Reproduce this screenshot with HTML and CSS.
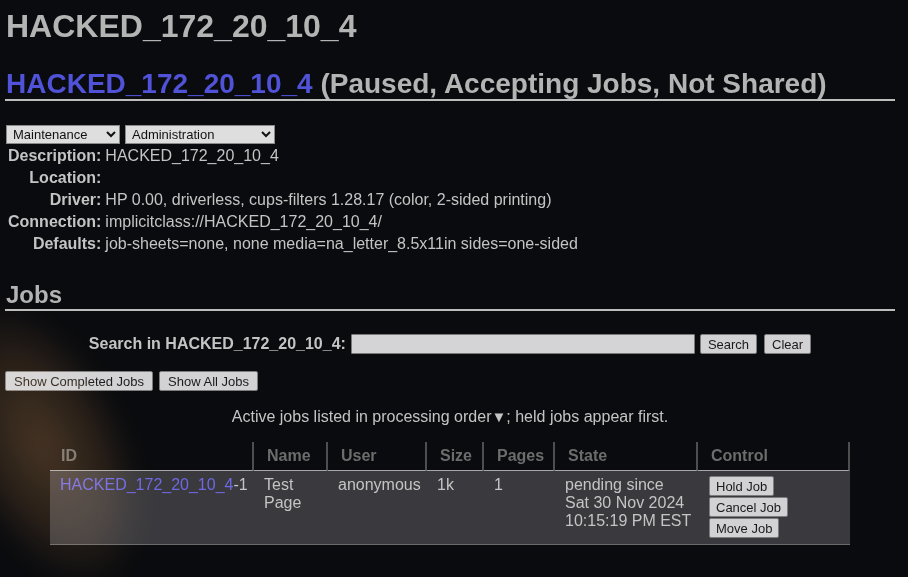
FILE: index.html
```html
<!DOCTYPE html>
<html lang="en">
<head>
<meta charset="utf-8">
<title>HACKED_172_20_10_4 - CUPS</title>
<link rel="stylesheet" href="styles.css">
</head>
<body>
<div class="frame">
<div class="glow"></div>
<main class="page">
  <h1 class="title">HACKED_172_20_10_4</h1>
  <h2 class="printer"><a href="#">HACKED_172_20_10_4</a> (Paused, Accepting Jobs, Not Shared)</h2>

  <form class="actions">
    <select class="sel sel-maint"><option>Maintenance</option></select>
    <select class="sel sel-admin"><option>Administration</option></select>
  </form>

  <table class="info">
    <tr><th>Description:</th><td>HACKED_172_20_10_4</td></tr>
    <tr><th>Location:</th><td></td></tr>
    <tr><th>Driver:</th><td>HP 0.00, driverless, cups-filters 1.28.17 (color, 2-sided printing)</td></tr>
    <tr><th>Connection:</th><td>implicitclass://HACKED_172_20_10_4/</td></tr>
    <tr><th>Defaults:</th><td>job-sheets=none, none media=na_letter_8.5x11in sides=one-sided</td></tr>
  </table>

  <h2 class="section">Jobs</h2>

  <form class="search">
    <label class="search-label">Search in HACKED_172_20_10_4:</label>
    <input class="search-input" type="text">
    <button type="button" class="btn btn-search">Search</button>
    <button type="button" class="btn btn-clear">Clear</button>
  </form>

  <div class="show">
    <button type="button" class="btn btn-show">Show Completed Jobs</button>
    <button type="button" class="btn btn-show">Show All Jobs</button>
  </div>

  <p class="note">Active jobs listed in processing order<span class="arrow">▼</span>; held jobs appear first.</p>

  <table class="jobs">
    <colgroup>
      <col class="c-id"><col class="c-name"><col class="c-user"><col class="c-size"><col class="c-pages"><col class="c-state"><col class="c-control">
    </colgroup>
    <thead>
      <tr><th class="first">ID</th><th>Name</th><th>User</th><th>Size</th><th>Pages</th><th>State</th><th>Control</th></tr>
    </thead>
    <tbody>
      <tr>
        <td class="nowrap"><a href="#">HACKED_172_20_10_4</a>-1</td>
        <td>Test<br>Page</td>
        <td>anonymous</td>
        <td>1k</td>
        <td>1</td>
        <td class="nowrap">pending since<br>Sat 30 Nov 2024<br>10:15:19 PM EST</td>
        <td class="control">
          <button type="button" class="btn btn-job">Hold Job</button>
          <button type="button" class="btn btn-job">Cancel Job</button>
          <button type="button" class="btn btn-job">Move Job</button>
        </td>
      </tr>
    </tbody>
  </table>
</main>
</div>
</body>
</html>
```

FILE: styles.css
```css
html, body {
  margin: 0;
  padding: 0;
  background: #0a0b0e;
}
body {
  font-family: "Liberation Sans", Arial, sans-serif;
  font-size: 16px;
  color: #c4c4c4;
}
.frame {
  position: relative;
  height: 577px;
  overflow: hidden;
}
.page {
  width: 890px;
  margin-left: 5px;
  padding-top: 8px;
}
a { color: #5657dc; text-decoration: none; }

.title {
  margin: 0;
  padding-left: 1px;
  font-size: 32px;
  line-height: 37px;
  font-weight: bold;
  color: #b4b4b4;
}
.printer {
  margin: 24px 0 0;
  padding-left: 1px;
  font-size: 28px;
  line-height: 30px;
  font-weight: bold;
  color: #b4b4b4;
  border-bottom: 2px solid #bdbdbd;
}
.printer a { color: #5052d8; }

.actions {
  display: flex;
  gap: 5px;
  margin: 24px 0 0 1px;
}
.sel {
  font-family: "Liberation Sans", Arial, sans-serif;
  font-size: 13px;
  height: 19px;
  padding: 0 0 0 2px;
  background-color: #dedede;
  color: #111;
  border: 1px solid #8a8a8a;
  border-radius: 0;
}
.sel-maint { width: 114px; }
.sel-admin { width: 150px; }

.info {
  border-collapse: collapse;
  margin: 1px 0 0 1px;
}
.info th, .info td {
  padding: 2px 2px;
  line-height: 18px;
  vertical-align: top;
}
.info th {
  text-align: right;
  font-weight: bold;
  color: #c4c4c4;
  white-space: nowrap;
}
.info td { color: #c4c4c4; }

.section {
  margin: 26px 0 0;
  padding-left: 1px;
  font-size: 24px;
  line-height: 28px;
  font-weight: bold;
  color: #b4b4b4;
  border-bottom: 2px solid #bdbdbd;
}

.search {
  display: flex;
  justify-content: center;
  align-items: center;
  margin: 23px 0 0;
}
.search-label {
  font-weight: bold;
  color: #c4c4c4;
  margin-right: 5px;
}
.search-input {
  width: 344px;
  height: 20px;
  box-sizing: border-box;
  background: #d4d4d6;
  border: 1px solid #7a7a7a;
  border-radius: 1px;
  margin: 0 5px 0 0;
}
.btn {
  font-family: "Liberation Sans", Arial, sans-serif;
  font-size: 13px;
  height: 20px;
  box-sizing: border-box;
  padding: 0 6px;
  background: #d2d2d4;
  color: #1a1a1a;
  border: 1px solid #7c7c7c;
  border-radius: 2px;
  line-height: 17px;
}
.btn-search { margin-right: 7px; padding: 0 7px; }
.btn-clear { padding: 0 7px; }

.show {
  display: flex;
  gap: 6px;
  margin-top: 17px;
}
.btn-show { padding: 0 8px; }

.note {
  margin: 17px 0 0;
  text-align: center;
  line-height: 18px;
  color: #c4c4c4;
}
.arrow { font-size: 15px; }

.jobs {
  margin: 16px auto 0;
  width: 800px;
  table-layout: fixed;
  border-collapse: separate;
  border-spacing: 0;
}
.c-id { width: 204px; }
.c-name { width: 74px; }
.c-user { width: 99px; }
.c-size { width: 57px; }
.c-pages { width: 71px; }
.c-state { width: 143px; }
.c-control { width: 152px; }

.jobs th {
  text-align: left;
  font-weight: bold;
  color: #6c6c6c;
  padding: 5px 2px 5px 13px;
  line-height: 18px;
  border-right: 2px solid #4e4e4e;
  border-bottom: 1px solid #a8a8a8;
}
.jobs th.first { padding-left: 11px; }
.jobs td {
  background: #3a3a3e;
  color: #c4c4c4;
  padding: 5px 2px 5px 10px;
  line-height: 18px;
  vertical-align: top;
  border-bottom: 1px solid #6a6a6a;
}
.jobs td.nowrap { white-space: nowrap; }
.jobs td a { color: #6e68e2; }
.jobs td.control { padding: 4px 2px 6px 11px; }
.btn-job {
  display: block;
  margin: 1px 0 0;
}

.glow {
  position: absolute;
  left: -40px;
  top: 295px;
  width: 165px;
  height: 300px;
  border-radius: 50%;
  background: radial-gradient(ellipse at center, rgba(140, 96, 52, 0.45) 0%, rgba(120, 80, 40, 0.25) 45%, rgba(100, 65, 30, 0) 72%);
  transform: rotate(-26deg);
  filter: blur(10px);
  mix-blend-mode: screen;
  pointer-events: none;
  z-index: 2;
}
```
